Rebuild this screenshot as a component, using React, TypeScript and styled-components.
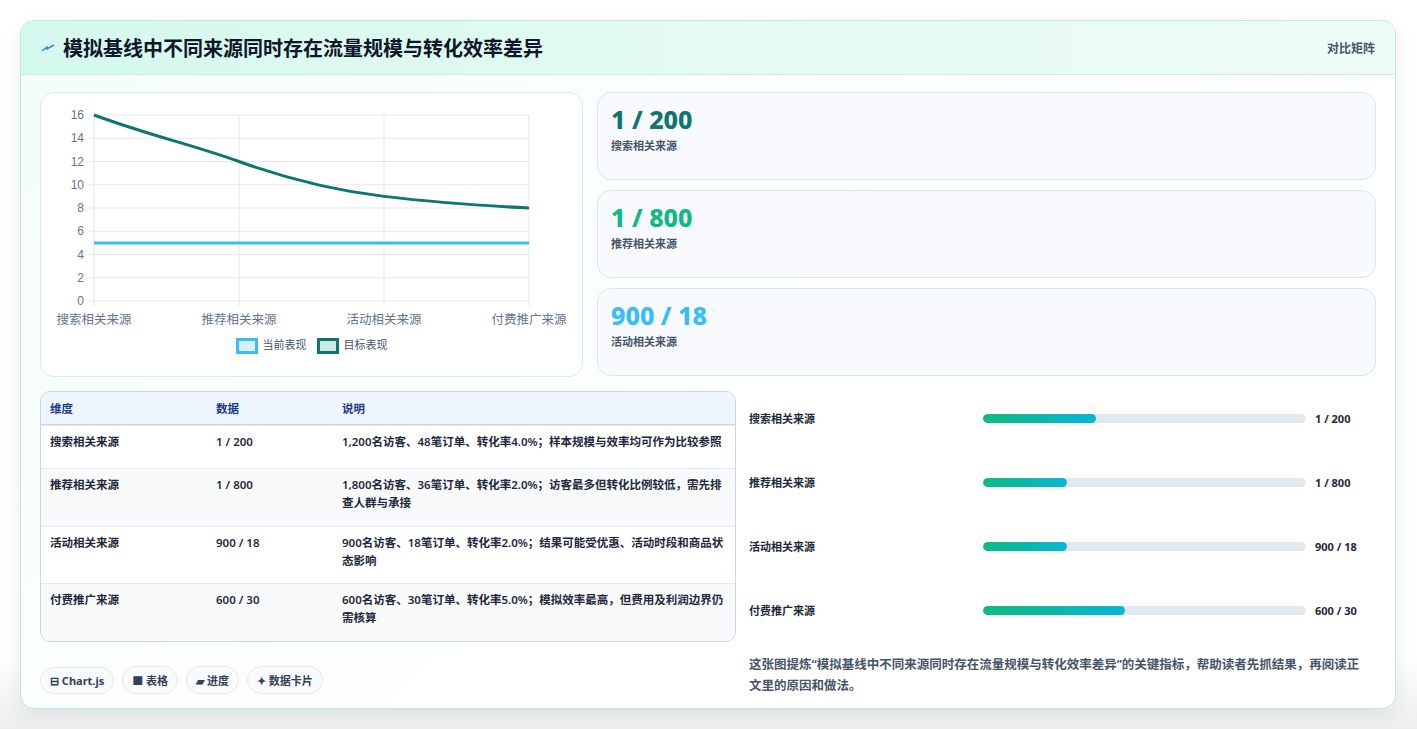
import styled, { createGlobalStyle } from 'styled-components';

const Global = createGlobalStyle`
  body { margin: 0; background: #f3f4f6; font-family: "Noto Sans", "Noto Sans CJK SC", sans-serif; }
`;

const Page = styled.div`
  padding: 20px 20px 20px 20px;
  background: linear-gradient(#fff 0 90%, #eceeef);
  height: 729px;
  box-sizing: border-box;
`;

const Card = styled.div`
  width: 1376px;
  height: 689px;
  box-sizing: border-box;
  border: 1px solid #b9ecdc;
  border-radius: 14px;
  background: linear-gradient(135deg, #f4fdf9, #ffffff 60%);
  box-shadow: 0 6px 20px rgba(0,0,0,0.08);
  overflow: hidden;
`;

const Header = styled.div`
  height: 54px;
  box-sizing: border-box;
  display: flex;
  align-items: center;
  justify-content: space-between;
  padding: 0 20px;
  background: linear-gradient(90deg, #d5f8ee, #e6fbf1 60%, #eefcf6);
  border-bottom: 1px solid #c9efe2;
`;

const Title = styled.h1`
  margin: 0;
  font-size: 20px;
  font-weight: 700;
  color: #0f172a;
  display: flex;
  align-items: center;
  gap: 8px;
`;

const Badge = styled.span`
  font-size: 12px;
  color: #475569;
  font-weight: 600;
`;

const Body = styled.div`
  padding: 17px 19px 0 19px;
`;

const TopRow = styled.div`
  display: grid;
  grid-template-columns: 543px 1fr;
  gap: 14px;
`;

const Panel = styled.div`
  background: #fff;
  border: 1px solid #d6efe7;
  border-radius: 14px;
`;

const Stats = styled.div`
  display: flex;
  flex-direction: column;
  gap: 10px;
`;

const Stat = styled.div`
  height: 88px;
  box-sizing: border-box;
  padding: 10px 13px;
  border: 1px solid #cfeee6;
  border-radius: 14px;
  background: #f8fafd;
`;

const StatValue = styled.div<{ $c: string }>`
  font-size: 25px;
  font-weight: 800;
  color: ${p => p.$c};
  line-height: 32px;
`;

const StatLabel = styled.div`
  font-size: 11px;
  color: #475569;
  font-weight: 600;
  margin-top: 2px;
`;

const BottomRow = styled.div`
  display: grid;
  grid-template-columns: 696px 1fr;
  gap: 13px;
  margin-top: 14px;
`;

const Table = styled.table`
  width: 100%;
  border-collapse: separate;
  border-spacing: 0;
  border: 1px solid #cbd5e1;
  border-radius: 10px;
  overflow: hidden;
  font-size: 11.5px;
  font-weight: 600;
  color: #1e293b;
`;

const Th = styled.th`
  text-align: left;
  font-weight: 700;
  color: #1e3a8a;
  background: #eef5fd;
  padding: 8px 9px;
  height: 16px;
  border-bottom: 1px solid #cbd5e1;
`;

const Td = styled.td<{ $alt?: boolean }>`
  padding: 7px 9px;
  vertical-align: top;
  line-height: 18px;
  height: 38px;
  box-sizing: border-box;
  background: ${p => (p.$alt ? '#f8fafc' : '#fff')};
  border-top: 1px solid #e2e8f0;
`;

const ProgList = styled.div`
  display: flex;
  flex-direction: column;
  margin-top: -5px;
`;

const ProgRow = styled.div`
  display: grid;
  grid-template-columns: 225px 323px 1fr;
  gap: 9px;
  align-items: center;
  height: 64px;
  font-size: 11px;
  font-weight: 700;
  color: #1e293b;
`;

const Track = styled.div`
  height: 9px;
  border-radius: 5px;
  background: #e2e8f0;
  overflow: hidden;
`;

const Fill = styled.div`
  height: 100%;
  border-radius: 5px;
  background: linear-gradient(90deg, #10b981, #06b6d4);
`;

const Footer = styled.div`
  display: grid;
  grid-template-columns: 696px 1fr;
  gap: 13px;
  margin-top: 12px;
`;

const Tags = styled.div`
  display: flex;
  gap: 8px;
  align-items: center;
  padding-top: 12px;
  align-self: start;
`;

const Tag = styled.span`
  font-size: 11px;
  font-weight: 700;
  color: #334155;
  padding: 5px 9px;
  border: 1px solid #e2e8f0;
  border-radius: 14px;
  background: #f8fafc;
`;

const Note = styled.p`
  margin: 0;
  padding-right: 8px;
  font-size: 12.5px;
  line-height: 21px;
  color: #475569;
  font-weight: 600;
`;

const Legend = styled.div`
  display: flex;
  justify-content: center;
  gap: 10px;
  font-size: 11px;
  color: #475569;
  margin-top: -2px;
`;

const Swatch = styled.span<{ $b: string; $f: string }>`
  display: inline-block;
  width: 16px;
  height: 10px;
  border: 3px solid ${p => p.$b};
  background: ${p => p.$f};
  vertical-align: middle;
  margin-right: 5px;
`;

const cats = ['搜索相关来源', '推荐相关来源', '活动相关来源', '付费推广来源'];
const target = [16, 12, 9, 8];

function Chart() {
  const x0 = 53, x1 = 488, y0 = 22, y1 = 208;
  const xs = cats.map((_, i) => x0 + ((x1 - x0) / 3) * i);
  const y = (v: number) => y1 - ((y1 - y0) * v) / 16;
  const p = target.map((v, i) => [xs[i], y(v)]);
  const d = `M${p[0][0]},${p[0][1]} C${p[0][0] + 60},${p[0][1] + 22} ${p[1][0] - 50},${p[1][1] - 18} ${p[1][0]},${p[1][1]} S${p[2][0] - 50},${p[2][1] - 6} ${p[2][0]},${p[2][1]} S${p[3][0] - 40},${p[3][1] - 2} ${p[3][0]},${p[3][1]}`;
  return (
    <svg width="541" height="245" style={{ display: 'block' }}>
      {[0, 2, 4, 6, 8, 10, 12, 14, 16].map(v => (
        <g key={v}>
          <line x1={x0 - 5} x2={x1} y1={y(v)} y2={y(v)} stroke="#e5e7eb" />
          <text x={x0 - 10} y={y(v) + 4} fontSize="12" fill="#64748b" textAnchor="end" fontFamily="Liberation Sans">{v}</text>
        </g>
      ))}
      {xs.map((x, i) => (
        <g key={i}>
          <line x1={x} x2={x} y1={y0} y2={y1 + 5} stroke="#e5e7eb" />
          <text x={x} y={y1 + 23} fontSize="12.5" fill="#64748b" textAnchor="middle">{cats[i]}</text>
        </g>
      ))}
      <line x1={x0} x2={x1} y1={y(5)} y2={y(5)} stroke="#38bdf8" strokeWidth="3" />
      <path d={d} fill="none" stroke="#0f766e" strokeWidth="3" />
    </svg>
  );
}

const rows = [
  ['搜索相关来源', '1 / 200', '1,200名访客、48笔订单、转化率4.0%；样本规模与效率均可作为比较参照'],
  ['推荐相关来源', '1 / 800', '1,800名访客、36笔订单、转化率2.0%；访客最多但转化比例较低，需先排查人群与承接'],
  ['活动相关来源', '900 / 18', '900名访客、18笔订单、转化率2.0%；结果可能受优惠、活动时段和商品状态影响'],
  ['付费推广来源', '600 / 30', '600名访客、30笔订单、转化率5.0%；模拟效率最高，但费用及利润边界仍需核算'],
];
const prog = [35, 26, 26, 44];

export default function App() {
  return (
    <Page>
      <Global />
      <Card>
        <Header>
          <Title>
            <svg width="14" height="10" viewBox="0 0 14 10"><path d="M1 8 L6 4 L6 6 L13 2" stroke="#3b82f6" strokeWidth="1.5" fill="none" /></svg>
            模拟基线中不同来源同时存在流量规模与转化效率差异
          </Title>
          <Badge>对比矩阵</Badge>
        </Header>
        <Body>
          <TopRow>
            <Panel style={{ height: 283 }}>
              <Chart />
              <Legend>
                <span><Swatch $b="#38bdf8" $f="#d6f0fd" />当前表现</span>
                <span><Swatch $b="#0f766e" $f="#d1e7e4" />目标表现</span>
              </Legend>
            </Panel>
            <Stats>
              <Stat><StatValue $c="#0f766e">1 / 200</StatValue><StatLabel>搜索相关来源</StatLabel></Stat>
              <Stat><StatValue $c="#10b981">1 / 800</StatValue><StatLabel>推荐相关来源</StatLabel></Stat>
              <Stat><StatValue $c="#38bdf8">900 / 18</StatValue><StatLabel>活动相关来源</StatLabel></Stat>
            </Stats>
          </TopRow>
          <BottomRow>
            <Table>
              <thead>
                <tr><Th style={{ width: 148 }}>维度</Th><Th style={{ width: 108 }}>数据</Th><Th>说明</Th></tr>
              </thead>
              <tbody>
                {rows.map((r, i) => (
                  <tr key={i}>
                    {r.map((c, j) => <Td key={j} $alt={i % 2 === 1}>{c}</Td>)}
                  </tr>
                ))}
              </tbody>
            </Table>
            <ProgList>
              {rows.map((r, i) => (
                <ProgRow key={i}>
                  <span>{r[0]}</span>
                  <Track><Fill style={{ width: `${prog[i]}%` }} /></Track>
                  <span>{r[1]}</span>
                </ProgRow>
              ))}
            </ProgList>
          </BottomRow>
          <Footer>
            <Tags>
              <Tag>⊟ Chart.js</Tag>
              <Tag>■ 表格</Tag>
              <Tag>▰ 进度</Tag>
              <Tag>✦ 数据卡片</Tag>
            </Tags>
            <Note>这张图提炼“模拟基线中不同来源同时存在流量规模与转化效率差异”的关键指标，帮助读者先抓结果，再阅读正文里的原因和做法。</Note>
          </Footer>
        </Body>
      </Card>
    </Page>
  );
}
